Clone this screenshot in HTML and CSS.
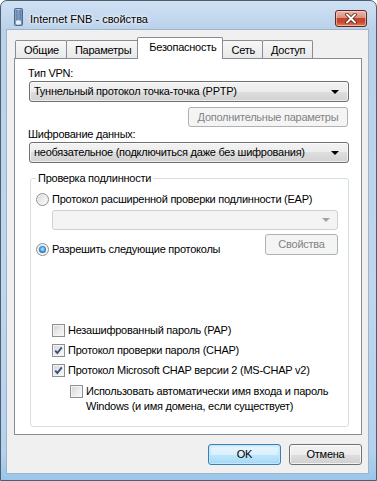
FILE: index.html
```html
<!DOCTYPE html>
<html lang="ru">
<head>
<meta charset="utf-8">
<title>Internet FNB - свойства</title>
<link rel="stylesheet" href="styles.css">
</head>
<body>
<div class="window">
  <div class="titlebar">
    <svg class="appicon" width="9" height="18" viewBox="0 0 9 18">
      <defs>
        <linearGradient id="ig" x1="0" y1="0" x2="1" y2="0">
          <stop offset="0" stop-color="#6f8fb5"/>
          <stop offset="0.5" stop-color="#c9d8ea"/>
          <stop offset="1" stop-color="#5a7aa3"/>
        </linearGradient>
      </defs>
      <rect x="0.5" y="0.5" width="8" height="17" rx="1" fill="url(#ig)" stroke="#4e6a8f"/>
      <path d="M2 3h5M2 5h5M2 7h5M2 9h5M2 11h5" stroke="#3e5f8a" stroke-width="1"/>
      <rect x="2" y="13" width="5" height="3" fill="#e8eef6"/>
    </svg>
    <span class="title">Internet FNB - свойства</span>
    <div class="close">
      <svg width="14" height="11" viewBox="0 0 14 11">
        <path d="M3 1.5 L11 9.5 M11 1.5 L3 9.5" stroke="#5a1d12" stroke-width="3.6" stroke-linecap="round"/>
        <path d="M3 1.5 L11 9.5 M11 1.5 L3 9.5" stroke="#ffffff" stroke-width="2" stroke-linecap="round"/>
      </svg>
    </div>
  </div>

  <div class="client">
    <div class="tabs">
      <div class="tab">Общие</div>
      <div class="tab">Параметры</div>
      <div class="tab active">Безопасность</div>
      <div class="tab">Сеть</div>
      <div class="tab">Доступ</div>
    </div>

    <div class="panel">
      <div class="label">Тип VPN:</div>
      <div class="combo">
        <span class="combo-text">Туннельный протокол точка-точка (PPTP)</span>
        <span class="arrow"></span>
      </div>
      <div class="row-end">
        <div class="btn disabled wide">Дополнительные параметры</div>
      </div>
      <div class="label">Шифрование данных:</div>
      <div class="combo">
        <span class="combo-text">необязательное (подключиться даже без шифрования)</span>
        <span class="arrow"></span>
      </div>

      <fieldset class="group">
        <legend>Проверка подлинности</legend>
        <div class="opt">
          <span class="radio"></span>
          <span class="opt-text">Протокол расширенной проверки подлинности (EAP)</span>
        </div>
        <div class="combo disabled indent">
          <span class="combo-text"></span>
          <span class="arrow"></span>
        </div>
        <div class="opt-row">
          <div class="opt opt-shift">
            <span class="radio checked"></span>
            <span class="opt-text">Разрешить следующие протоколы</span>
          </div>
          <div class="btn disabled">Свойства</div>
        </div>

        <div class="checks">
          <div class="check-row">
            <span class="check"></span>
            <span class="opt-text">Незашифрованный пароль (PAP)</span>
          </div>
          <div class="check-row">
            <span class="check checked">
              <svg width="11" height="11" viewBox="0 0 11 11"><path d="M2.2 5.6 L4.3 8 L8.8 2.4" fill="none" stroke="#3b4f83" stroke-width="1.9"/></svg>
            </span>
            <span class="opt-text">Протокол проверки пароля (CHAP)</span>
          </div>
          <div class="check-row">
            <span class="check checked">
              <svg width="11" height="11" viewBox="0 0 11 11"><path d="M2.2 5.6 L4.3 8 L8.8 2.4" fill="none" stroke="#3b4f83" stroke-width="1.9"/></svg>
            </span>
            <span class="opt-text">Протокол Microsoft CHAP версии 2 (MS-CHAP v2)</span>
          </div>
          <div class="check-row sub">
            <span class="check"></span>
            <span class="opt-text">Использовать автоматически имя входа и пароль<br>Windows (и имя домена, если существует)</span>
          </div>
        </div>
      </fieldset>
    </div>

    <div class="buttons">
      <div class="btn default">OK</div>
      <div class="btn">Отмена</div>
    </div>
  </div>
</div>
</body>
</html>
```

FILE: styles.css
```css
html, body {
  margin: 0;
  padding: 0;
}

body {
  width: 377px;
  height: 481px;
  overflow: hidden;
  background: #ffffff;
  font-family: "Liberation Sans", Arial, sans-serif;
  font-size: 11px;
  letter-spacing: -0.25px;
  color: #000;
  white-space: nowrap;
}

.window {
  width: 377px;
  height: 481px;
  box-sizing: border-box;
  border: 1px solid #4f5d6d;
  border-radius: 7px 7px 0 0;
  background: linear-gradient(to bottom, #cfe1f4 0, #bad1ea 29px, #bfd6ee 60%, #b4d2ee 94%, #98c6ea 100%);
  padding: 0 8px 7px 6px;
  display: flex;
  flex-direction: column;
}

/* ---------- title bar ---------- */
.titlebar {
  height: 29px;
  display: flex;
  align-items: flex-start;
  padding-left: 7px;
}

.appicon {
  margin-top: 7px;
  flex: none;
}

.title {
  margin-top: 11px;
  margin-left: 7px;
  line-height: 14px;
  font-size: 11px;
  letter-spacing: 0;
  color: #000;
  text-shadow: 0 0 6px #ffffff, 0 0 3px #ffffff;
  flex: 1;
}

.close {
  margin-top: 9px;
  margin-right: 1px;
  width: 32px;
  height: 17px;
  box-sizing: border-box;
  border: 1px solid #5b2a22;
  border-radius: 3px;
  background: linear-gradient(to bottom, #eab9ac 0%, #dc8f7b 45%, #c5432a 50%, #c84a2c 75%, #e0825f 100%);
  box-shadow: inset 0 0 0 1px rgba(255, 220, 210, 0.55);
  display: flex;
  align-items: center;
  justify-content: center;
}

/* ---------- client ---------- */
.client {
  flex: 1;
  background: #f0f0f0;
  box-shadow: 0 0 0 1px #9fb3c9;
  padding: 7px 6px 0 7px;
  display: flex;
  flex-direction: column;
}

.tabs {
  display: flex;
  align-items: flex-start;
  padding-left: 1px;
  position: relative;
  z-index: 1;
  height: 22px;
}

.tab {
  margin-top: 3px;
  height: 18px;
  box-sizing: border-box;
  border: 1px solid #898c95;
  border-bottom: none;
  border-radius: 2px 2px 0 0;
  background: linear-gradient(to bottom, #f7f7f7, #e9e9e9);
  padding: 2px 7px 0 8px;
  line-height: 14px;
  margin-right: -1px;
}

.tab.active {
  margin-top: 0;
  height: 22px;
  background: #ffffff;
  padding: 2px 6px 0 11px;
  margin-left: -1px;
  margin-right: -2px;
}

.tab.active + .tab {
  margin-left: 1px;
}

.panel {
  margin-top: -1px;
  height: 377px;
  box-sizing: border-box;
  border: 1px solid #898c95;
  background: #ffffff;
  padding: 7px 12px 0 14px;
  display: flex;
  flex-direction: column;
}

.label {
  line-height: 14px;
  margin-left: -1px;
}

.combo {
  margin-top: 1px;
  height: 21px;
  box-sizing: border-box;
  border: 1px solid #707070;
  border-radius: 3px;
  background: linear-gradient(to bottom, #f3f3f3 0%, #ececec 50%, #dedede 50%, #d2d2d2 100%);
  box-shadow: inset 0 0 0 1px rgba(255, 255, 255, 0.6);
  display: flex;
  align-items: center;
  padding: 0 9px 0 4px;
}

.combo-text {
  flex: 1;
  line-height: 15px;
}

.arrow {
  width: 0;
  height: 0;
  border-left: 4px solid transparent;
  border-right: 4px solid transparent;
  border-top: 4px solid #000;
}

.combo.disabled {
  height: 20px;
  border-color: #d0d0d0;
  background: #f4f4f4;
  box-shadow: none;
  padding-right: 7px;
}

.combo.disabled .arrow {
  border-top-color: #a3a3a3;
}

.combo.indent {
  margin: 3px 0 0 16px;
}

.row-end {
  display: flex;
  justify-content: flex-end;
  margin-top: 5px;
  margin-right: 1px;
}

.btn {
  height: 21px;
  width: 73px;
  box-sizing: border-box;
  border: 1px solid #707070;
  border-radius: 3px;
  background: linear-gradient(to bottom, #f3f3f3 0%, #ececec 50%, #dedede 50%, #d0d0d0 100%);
  box-shadow: inset 0 0 0 1px rgba(255, 255, 255, 0.7);
  display: flex;
  align-items: center;
  justify-content: center;
  line-height: 15px;
}

.btn.disabled {
  border-color: #adb2b5;
  background: #f4f4f4;
  box-shadow: none;
  color: #838383;
}

.btn.wide {
  width: 160px;
  height: 20px;
}

.btn.default {
  border-color: #3c7fb1;
  background: linear-gradient(to bottom, #eaf6fd 0%, #d9f0fc 50%, #bee6fd 50%, #a7d9f5 100%);
  box-shadow: inset 0 0 0 1px #c4e7fb, inset 0 0 2px 1px #9cd6f7;
}

/* ---------- group box ---------- */
.group {
  margin: 8px 0 0 1px;
  border: 1px solid #d5dfe5;
  border-radius: 3px;
  padding: 7px 10px 12px 5px;
  min-width: 0;
}

.group legend {
  padding: 0 2px;
  line-height: 14px;
}

.opt {
  display: flex;
  align-items: center;
  line-height: 15px;
}

.opt-text {
  margin-left: 3px;
  line-height: 15px;
}

.radio {
  flex: none;
  width: 13px;
  height: 13px;
  box-sizing: border-box;
  border-radius: 50%;
  border: 1px solid #8e8f8f;
  background: linear-gradient(135deg, #d2d3d4 0%, #ececec 50%, #fbfbfb 100%);
  box-shadow: inset 0 0 0 1px #f4f4f4;
  display: flex;
  align-items: center;
  justify-content: center;
}

.radio.checked::after {
  content: "";
  width: 7px;
  height: 7px;
  border-radius: 50%;
  background: radial-gradient(circle at 50% 45%, #c4f0ff 0, #5fb3ec 35%, #1f5ea8 75%, #153f7a 100%);
}

.opt-row {
  display: flex;
  justify-content: space-between;
  align-items: flex-start;
  margin-top: 4px;
}

.opt-shift {
  margin-top: 8px;
}

.checks {
  margin-top: 66px;
  margin-left: 16px;
  display: flex;
  flex-direction: column;
}

.check-row {
  display: flex;
  align-items: flex-start;
  margin-top: 5px;
}

.check-row:first-child {
  margin-top: 0;
}

.check-row.sub {
  margin-top: 6px;
  margin-left: 18px;
}

.check-row .opt-text {
  margin-left: 3px;
}

.check {
  flex: none;
  margin-top: 1px;
  width: 13px;
  height: 13px;
  box-sizing: border-box;
  border: 1px solid #8e8f8f;
  background: linear-gradient(135deg, #cfd1d4 0%, #e9eaeb 50%, #fafafa 100%);
  box-shadow: inset 0 0 0 1px #f4f4f4;
  display: flex;
  align-items: center;
  justify-content: center;
}

/* ---------- dialog buttons ---------- */
.buttons {
  display: flex;
  justify-content: flex-end;
  gap: 8px;
  margin-top: 9px;
}
```
